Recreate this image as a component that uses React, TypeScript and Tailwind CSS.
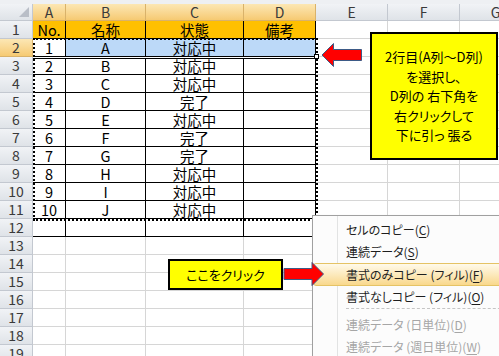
import React from "react"

type Col = { key: string; w: string }

const cols: Col[] = [
    { key: "A", w: "w-[33px]" },
    { key: "B", w: "w-[80px]" },
    { key: "C", w: "w-[98px]" },
    { key: "D", w: "w-[72px]" },
    { key: "E", w: "w-[72px]" },
    { key: "F", w: "w-[72px]" },
    { key: "G", w: "w-[72px]" },
]

const data: string[][] = [
    ["No.", "名称", "状態", "備考"],
    ["1", "A", "対応中", ""],
    ["2", "B", "対応中", ""],
    ["3", "C", "対応中", ""],
    ["4", "D", "完了", ""],
    ["5", "E", "対応中", ""],
    ["6", "F", "完了", ""],
    ["7", "G", "完了", ""],
    ["8", "H", "対応中", ""],
    ["9", "I", "対応中", ""],
    ["10", "J", "対応中", ""],
]

const menuItems = [
    { label: "セルのコピー", key: "C" },
    { label: "連続データ", key: "S" },
    { label: "書式のみコピー (フィル)", key: "F", active: true },
    { label: "書式なしコピー (フィル)", key: "O" },
    { sep: true, label: "", key: "" },
    { label: "連続データ (日単位)", key: "D", disabled: true },
    { label: "連続データ (週日単位)", key: "W", disabled: true },
]

const grayHead = "bg-linear-to-b from-[#f1f3f6] to-[#dfe3e8] border-[#c3c8d0]"
const goldHead = "bg-linear-to-b from-[#fce7b4] to-[#f6ca72] border-[#d9b26a]"

function HeaderRow() {
    return (
        <div className="flex h-[17px]">
            <div className={`relative w-[33px] shrink-0 border-r border-b ${grayHead}`}>
                <svg className="absolute right-[3px] bottom-[3px]" width="10" height="10" viewBox="0 0 10 10">
                    <polygon points="10,0 10,10 0,10" fill="#b9bec7" />
                </svg>
            </div>
            {cols.map((c, i) => (
                <div
                    key={c.key}
                    className={`${c.w} shrink-0 flex items-center justify-center border-r border-b text-[14px] leading-[16px] text-[#3a3a3a] ${i <= 3 ? goldHead : grayHead}`}
                >
                    {c.key}
                </div>
            ))}
        </div>
    )
}

function Row({ n }: { n: number }) {
    const cells = data[n - 1] || []
    return (
        <div className="flex h-[18px]">
            <div className={`w-[33px] shrink-0 flex items-center justify-center border-r border-b text-[14px] leading-[17px] text-[#3a3a3a] ${n === 2 ? goldHead : grayHead}`}>
                {n}
            </div>
            {cols.map((c, i) => {
                const inTable = n <= 12 && i <= 3
                let bg = "bg-white"
                if (n === 1 && i <= 3) bg = "bg-[#ffc000]"
                if (n === 2 && i >= 1 && i <= 3) bg = "bg-[#bcd9f8]"
                return (
                    <div
                        key={c.key}
                        className={`${c.w} shrink-0 flex items-center justify-center border-r border-b text-[14.5px] leading-[17px] text-black ${bg} ${inTable ? "border-black" : "border-[#d6d6d6]"}`}
                    >
                        {cells[i] || ""}
                    </div>
                )
            })}
        </div>
    )
}

function Arrow({ dir }: { dir: "left" | "right" }) {
    const pts = dir === "left"
        ? "2,13 13.5,1.5 13.5,7.5 41.5,7.5 41.5,18.5 13.5,18.5 13.5,24.5"
        : "2,7.5 30,7.5 30,1.5 41.5,13 30,24.5 30,18.5 2,18.5"
    return (
        <svg width="44" height="27" viewBox="0 0 44 27">
            <polygon points={pts} fill="#ff0000" stroke="#3d5a86" strokeWidth="1" strokeLinejoin="miter" />
        </svg>
    )
}

export default function App() {
    const rowNums = Array.from({ length: 19 }, (_, i) => i + 1)

    return (
        <div className="relative w-[499px] h-[356px] overflow-hidden bg-white font-['Noto_Sans_CJK_JP',sans-serif]">
            <div className="h-[4px] bg-[#eef0f3]" />
            <HeaderRow />
            {rowNums.map((n) => (
                <Row key={n} n={n} />
            ))}

            {/* selection bottom edge of row 2 */}
            <div className="absolute left-[33px] top-[56px] w-[284px] h-[3px] border-y border-black bg-white" />

            {/* fill range marching ants */}
            <div className="absolute left-[33px] top-[38px] w-[285px] h-[183px] border-2 border-dotted border-black" />

            {/* fill handle */}
            <div className="absolute left-[314px] top-[54px] w-[5px] h-[5px] border border-black bg-white" />

            {/* callout 1 */}
            <div className="absolute left-[370px] top-[32px] w-[128px] h-[128px] border-2 border-black bg-[#ffff00] flex flex-col items-center justify-center text-[13px] leading-[19.5px] text-black [font-feature-settings:'palt']">
                <p>2行目(A列～D列)</p>
                <p>を選択し、</p>
                <p>D列の 右下角を</p>
                <p>右クリックして</p>
                <p>下に引っ 張る</p>
            </div>

            <div className="absolute left-[320px] top-[42px]">
                <Arrow dir="left" />
            </div>

            {/* callout 2 */}
            <div className="absolute left-[168px] top-[259px] w-[115px] h-[31px] border-2 border-black bg-[#ffff00] flex items-center justify-center text-[13px] leading-none text-black [font-feature-settings:'palt']">
                ここをクリック
            </div>

            {/* context menu */}
            <div className="absolute left-[312px] top-[215px] w-[200px] h-[160px] border border-[#a0a0a0] bg-[#fcfcfc] pt-[3px] shadow-[2px_2px_3px_rgba(0,0,0,0.2)]">
                <div className="absolute left-[24px] top-0 bottom-0 w-px bg-[#e2e3e3]" />
                {menuItems.map((m, i) => {
                    if (m.sep) {
                        return (
                            <div key={i} className="h-[6px] pl-[33px]">
                                <div className="border-t border-dashed border-[#c5c5c5]" />
                            </div>
                        )
                    }
                    const color = m.disabled ? "text-[#a6a6a6]" : "text-[#1e1e1e]"
                    const box = m.active
                        ? "h-[23px] border border-[#e5c365] rounded-[3px] bg-linear-to-b from-[#fffaea] to-[#f9d88c] pl-[32px]"
                        : "h-[22px] border border-transparent pl-[32px]"
                    return (
                        <div key={i} className={`relative flex items-center text-[12px] leading-none [font-feature-settings:'palt'] ${color} ${box}`}>
                            <span>
                                {m.label}(<span className="underline underline-offset-2">{m.key}</span>)
                            </span>
                        </div>
                    )
                })}
            </div>

            <div className="absolute left-[282px] top-[261px]">
                <Arrow dir="right" />
            </div>
        </div>
    )
}
